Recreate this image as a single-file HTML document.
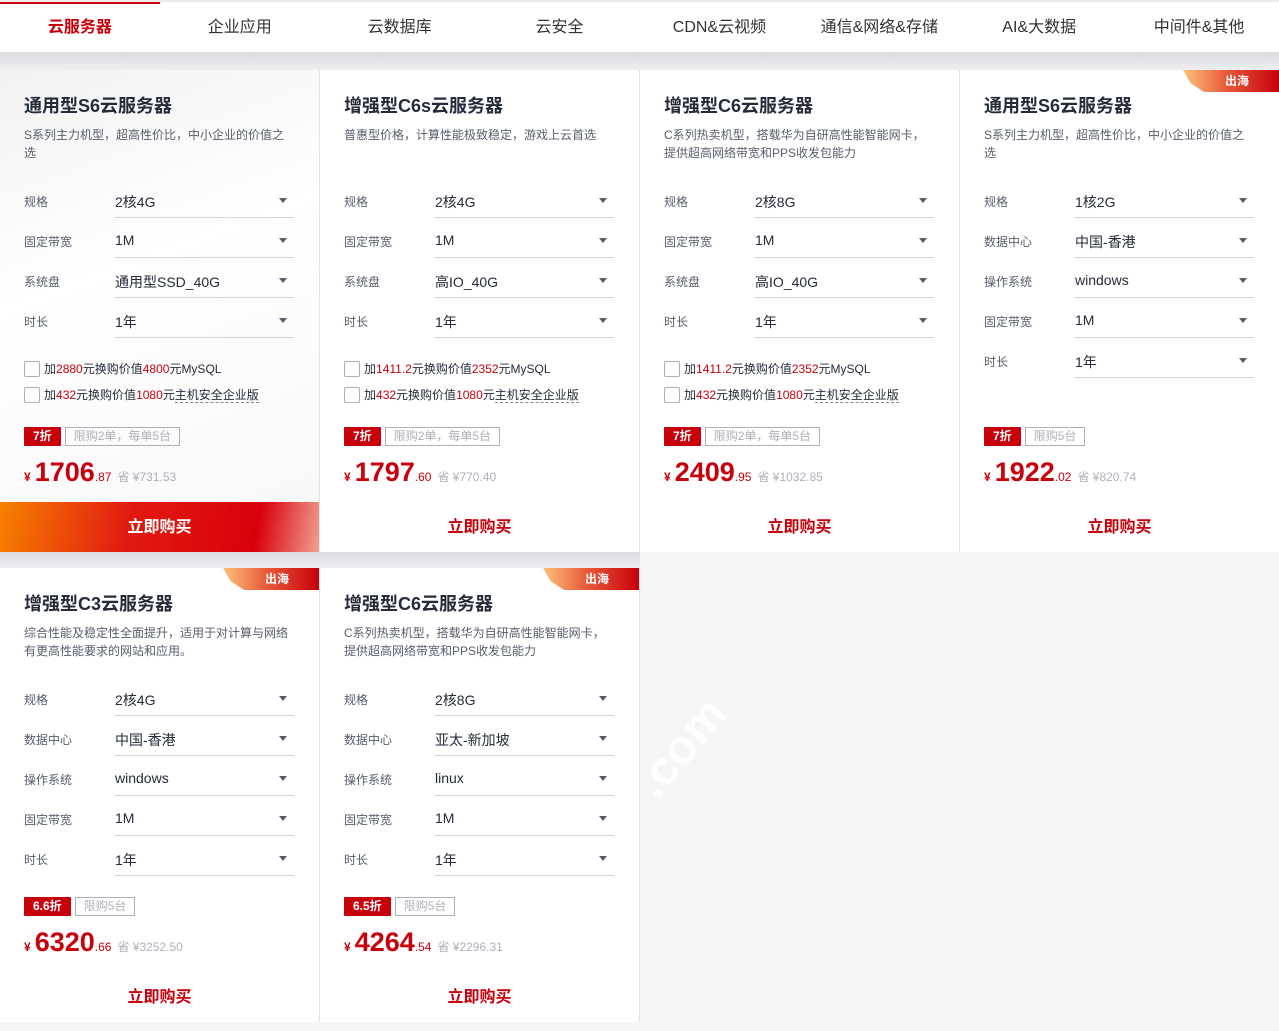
<!DOCTYPE html>
<html><head><meta charset="utf-8"><style>
*{margin:0;padding:0;box-sizing:border-box}
body{width:1279px;height:1031px;background:#f5f6f8;font-family:"Liberation Sans","Noto Sans CJK SC",sans-serif;position:relative;overflow:hidden;color:#252b3a}
.nav{position:absolute;left:0;top:2px;width:1279px;height:50px;background:#fff;display:flex;box-shadow:0 6px 14px rgba(0,0,0,.08)}
.nav div{width:160px;text-align:center;line-height:52px;font-size:16px;color:#333}
.nav .on{color:#c7000b;border-top:2px solid #c7000b;line-height:48px;font-weight:bold;background:#fff}
.topstrip{position:absolute;left:0;top:0;width:1279px;height:2px;background:#eee}
.gap{position:absolute;left:0;top:52px;width:1279px;height:18px;background:linear-gradient(#dcdde0,#eceef0)}
.gap2{position:absolute;left:0;top:552px;width:640px;height:16px;background:linear-gradient(#dcdde0,#eceef0)}
.card{position:absolute;width:320px;background:#fff;border-right:1px solid #e4e4e4}
.card .t{position:absolute;left:24px;top:22px;font-size:18px;font-weight:bold;color:#252b3a}
.card .d{position:absolute;left:24px;top:56px;width:270px;font-size:12px;line-height:18px;color:#575d6c}
.row{position:absolute;left:24px;width:270px;height:40px}
.row .l{position:absolute;left:0;top:-2px;font-size:12px;color:#575d6c}
.row .v{position:absolute;left:91px;top:-3px;width:179px;height:26px;border-bottom:1px solid #d0d3d9;font-size:14px;color:#252b3a}
.row .v:after{content:"";position:absolute;right:7px;top:6px;border-left:4px solid transparent;border-right:4px solid transparent;border-top:5px solid #575d6c}
.ck{position:absolute;left:24px;font-size:12px;color:#252b3a;padding-left:20px;line-height:16px}
.ck:before{content:"";position:absolute;left:0;top:0;width:14px;height:14px;border:1px solid #adb0b8;border-radius:2px}
.r{color:#c7000b}.u{border-bottom:1px dashed #888}
.tags{position:absolute;left:24px;display:flex;gap:4px}
.tg1{background:#c7000b;color:#fff;font-size:12px;font-weight:bold;height:19px;line-height:19px;padding:0 9px;border-radius:1px}
.tg2{border:1px solid #adb0b8;color:#adb0b8;font-size:12px;height:19px;line-height:17px;padding:0 8px}
.price{position:absolute;left:24px;color:#c7000b;white-space:nowrap}
.price .y{font-size:12px;font-weight:bold}
.price .b{font-size:27px;font-weight:bold;margin-left:4px}
.price .s{font-size:12px}
.price .sv{font-size:12px;color:#adb0b8;margin-left:6px}
.btn{position:absolute;left:0;width:319px;height:50px;line-height:52px;text-align:center;font-size:16px;font-weight:bold;color:#c7000b;background:#fff}
.btn.hot{color:#fff;background:linear-gradient(100deg,#f78200 0%,#e11b10 40%,#d9000c 80%,#f0a090 100%)}
.sea{position:absolute;right:0;top:0;width:96px;height:22px;background:linear-gradient(90deg,#fcc27a,#e85a3a 45%,#c7000b);clip-path:polygon(0 0,100% 0,100% 100%,22% 100%,8% 60%);color:#fff;font-size:12px;font-weight:bold;text-align:right;padding-right:30px;line-height:22px}
.wm{position:absolute;left:625px;top:720px;font-size:48px;font-weight:bold;color:#fff;transform:rotate(-50deg);opacity:.9}
</style></head><body>
<div class="topstrip"></div>
<div class="nav"><div class="on">云服务器</div><div>企业应用</div><div>云数据库</div><div>云安全</div><div>CDN&amp;云视频</div><div>通信&amp;网络&amp;存储</div><div>AI&amp;大数据</div><div>中间件&amp;其他</div></div>
<div class="gap"></div><div class="gap2"></div>

<div class="card" style="left:0;top:70px;height:482px;background:linear-gradient(160deg,#f2f2f3,#fff 40%,#f7f7f8)">
<div class="t">通用型S6云服务器</div><div class="d">S系列主力机型，超高性价比，中小企业的价值之选</div>
<div class="row" style="top:125px"><span class="l">规格</span><span class="v">2核4G</span></div>
<div class="row" style="top:165px"><span class="l">固定带宽</span><span class="v">1M</span></div>
<div class="row" style="top:205px"><span class="l">系统盘</span><span class="v">通用型SSD_40G</span></div>
<div class="row" style="top:245px"><span class="l">时长</span><span class="v">1年</span></div>
<div class="ck" style="top:291px">加<span class="r">2880</span>元换购价值<span class="r">4800</span>元MySQL</div>
<div class="ck" style="top:317px">加<span class="r">432</span>元换购价值<span class="r">1080</span>元<span class="u">主机安全企业版</span></div>
<div class="tags" style="top:357px"><span class="tg1">7折</span><span class="tg2">限购2单，每单5台</span></div>
<div class="price" style="top:387px"><span class="y">¥</span><span class="b">1706</span><span class="s">.87</span><span class="sv">省 ¥731.53</span></div>
<div class="btn hot" style="top:432px">立即购买</div></div>

<div class="card" style="left:320px;top:70px;height:482px">
<div class="t">增强型C6s云服务器</div><div class="d">普惠型价格，计算性能极致稳定，游戏上云首选</div>
<div class="row" style="top:125px"><span class="l">规格</span><span class="v">2核4G</span></div>
<div class="row" style="top:165px"><span class="l">固定带宽</span><span class="v">1M</span></div>
<div class="row" style="top:205px"><span class="l">系统盘</span><span class="v">高IO_40G</span></div>
<div class="row" style="top:245px"><span class="l">时长</span><span class="v">1年</span></div>
<div class="ck" style="top:291px">加<span class="r">1411.2</span>元换购价值<span class="r">2352</span>元MySQL</div>
<div class="ck" style="top:317px">加<span class="r">432</span>元换购价值<span class="r">1080</span>元<span class="u">主机安全企业版</span></div>
<div class="tags" style="top:357px"><span class="tg1">7折</span><span class="tg2">限购2单，每单5台</span></div>
<div class="price" style="top:387px"><span class="y">¥</span><span class="b">1797</span><span class="s">.60</span><span class="sv">省 ¥770.40</span></div>
<div class="btn" style="top:432px">立即购买</div></div>

<div class="card" style="left:640px;top:70px;height:482px">
<div class="t">增强型C6云服务器</div><div class="d">C系列热卖机型，搭载华为自研高性能智能网卡，提供超高网络带宽和PPS收发包能力</div>
<div class="row" style="top:125px"><span class="l">规格</span><span class="v">2核8G</span></div>
<div class="row" style="top:165px"><span class="l">固定带宽</span><span class="v">1M</span></div>
<div class="row" style="top:205px"><span class="l">系统盘</span><span class="v">高IO_40G</span></div>
<div class="row" style="top:245px"><span class="l">时长</span><span class="v">1年</span></div>
<div class="ck" style="top:291px">加<span class="r">1411.2</span>元换购价值<span class="r">2352</span>元MySQL</div>
<div class="ck" style="top:317px">加<span class="r">432</span>元换购价值<span class="r">1080</span>元<span class="u">主机安全企业版</span></div>
<div class="tags" style="top:357px"><span class="tg1">7折</span><span class="tg2">限购2单，每单5台</span></div>
<div class="price" style="top:387px"><span class="y">¥</span><span class="b">2409</span><span class="s">.95</span><span class="sv">省 ¥1032.85</span></div>
<div class="btn" style="top:432px">立即购买</div></div>

<div class="card" style="left:960px;top:70px;height:482px;width:319px;border-right:none">
<div class="sea">出海</div>
<div class="t">通用型S6云服务器</div><div class="d">S系列主力机型，超高性价比，中小企业的价值之选</div>
<div class="row" style="top:125px"><span class="l">规格</span><span class="v">1核2G</span></div>
<div class="row" style="top:165px"><span class="l">数据中心</span><span class="v">中国-香港</span></div>
<div class="row" style="top:205px"><span class="l">操作系统</span><span class="v">windows</span></div>
<div class="row" style="top:245px"><span class="l">固定带宽</span><span class="v">1M</span></div>
<div class="row" style="top:285px"><span class="l">时长</span><span class="v">1年</span></div>
<div class="tags" style="top:357px"><span class="tg1">7折</span><span class="tg2">限购5台</span></div>
<div class="price" style="top:387px"><span class="y">¥</span><span class="b">1922</span><span class="s">.02</span><span class="sv">省 ¥820.74</span></div>
<div class="btn" style="top:432px">立即购买</div></div>

<div class="card" style="left:0;top:568px;height:454px">
<div class="sea">出海</div>
<div class="t">增强型C3云服务器</div><div class="d">综合性能及稳定性全面提升，适用于对计算与网络有更高性能要求的网站和应用。</div>
<div class="row" style="top:125px"><span class="l">规格</span><span class="v">2核4G</span></div>
<div class="row" style="top:165px"><span class="l">数据中心</span><span class="v">中国-香港</span></div>
<div class="row" style="top:205px"><span class="l">操作系统</span><span class="v">windows</span></div>
<div class="row" style="top:245px"><span class="l">固定带宽</span><span class="v">1M</span></div>
<div class="row" style="top:285px"><span class="l">时长</span><span class="v">1年</span></div>
<div class="tags" style="top:329px"><span class="tg1">6.6折</span><span class="tg2">限购5台</span></div>
<div class="price" style="top:359px"><span class="y">¥</span><span class="b">6320</span><span class="s">.66</span><span class="sv">省 ¥3252.50</span></div>
<div class="btn" style="top:404px">立即购买</div></div>

<div class="card" style="left:320px;top:568px;height:454px">
<div class="sea">出海</div>
<div class="t">增强型C6云服务器</div><div class="d">C系列热卖机型，搭载华为自研高性能智能网卡，提供超高网络带宽和PPS收发包能力</div>
<div class="row" style="top:125px"><span class="l">规格</span><span class="v">2核8G</span></div>
<div class="row" style="top:165px"><span class="l">数据中心</span><span class="v">亚太-新加坡</span></div>
<div class="row" style="top:205px"><span class="l">操作系统</span><span class="v">linux</span></div>
<div class="row" style="top:245px"><span class="l">固定带宽</span><span class="v">1M</span></div>
<div class="row" style="top:285px"><span class="l">时长</span><span class="v">1年</span></div>
<div class="tags" style="top:329px"><span class="tg1">6.5折</span><span class="tg2">限购5台</span></div>
<div class="price" style="top:359px"><span class="y">¥</span><span class="b">4264</span><span class="s">.54</span><span class="sv">省 ¥2296.31</span></div>
<div class="btn" style="top:404px">立即购买</div></div>
<div class="wm">.com</div>
</body></html>
